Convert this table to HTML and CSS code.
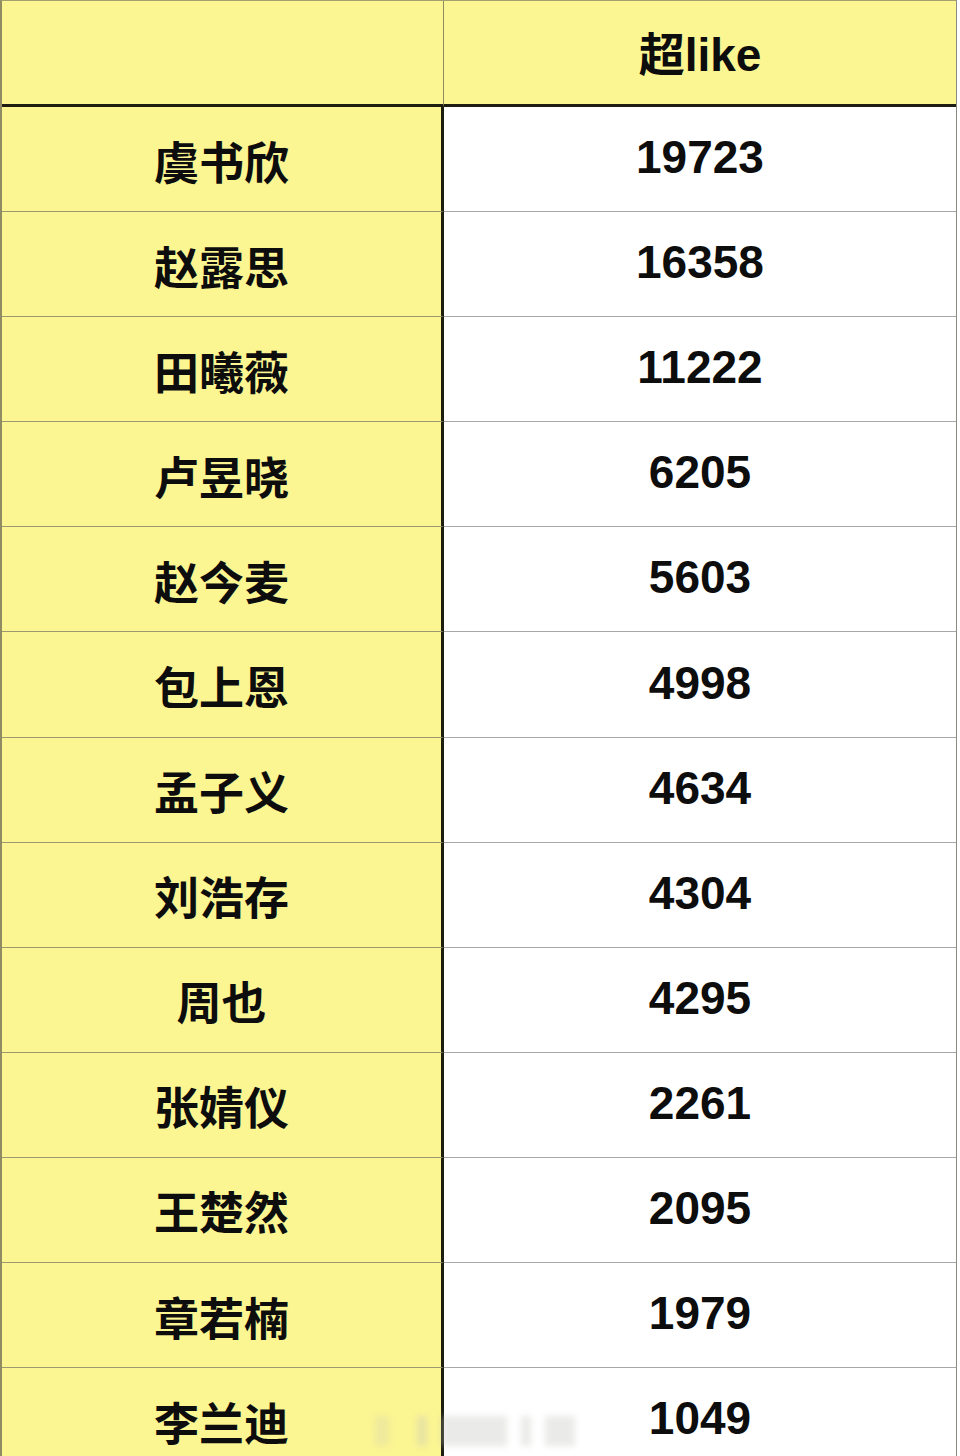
FILE: index.html
```html
<!DOCTYPE html>
<html lang="zh-CN">
<head>
<meta charset="utf-8">
<title>超like</title>
<link rel="stylesheet" href="styles.css">
</head>
<body>
<div class="sheet">
  <div class="cell head name-col"></div>
  <div class="cell head num-col">超like</div>

  <div class="cell name">虞书欣</div><div class="cell num">19723</div>
  <div class="cell name">赵露思</div><div class="cell num">16358</div>
  <div class="cell name">田曦薇</div><div class="cell num">11222</div>
  <div class="cell name">卢昱晓</div><div class="cell num">6205</div>
  <div class="cell name">赵今麦</div><div class="cell num">5603</div>
  <div class="cell name">包上恩</div><div class="cell num">4998</div>
  <div class="cell name">孟子义</div><div class="cell num">4634</div>
  <div class="cell name">刘浩存</div><div class="cell num">4304</div>
  <div class="cell name">周也</div><div class="cell num">4295</div>
  <div class="cell name">张婧仪</div><div class="cell num">2261</div>
  <div class="cell name">王楚然</div><div class="cell num">2095</div>
  <div class="cell name">章若楠</div><div class="cell num">1979</div>
  <div class="cell name">李兰迪</div><div class="cell num">1049</div>
</div>
<div class="watermark">
  <span class="wm w1"></span><span class="wm w2"></span><span class="wm w3"></span><span class="wm w4"></span><span class="wm w5"></span>
</div>
</body>
</html>
```

FILE: styles.css
```css
html, body {
  margin: 0;
  padding: 0;
  background: #ffffff;
  overflow: hidden;
}

.sheet {
  display: grid;
  grid-template-columns: 442px 512px;
  grid-template-rows: 106px;
  grid-auto-rows: 105.1px;
  width: 954px;
  border-top: 1px solid #a39f70;
  border-left: 2px solid #8f8b62;
  border-right: 1px solid #8c8c86;
  font-family: "Liberation Sans", "Noto Sans CJK SC", sans-serif;
  font-weight: 700;
  color: #0d0d0d;
}

.cell {
  display: flex;
  align-items: center;
  justify-content: center;
  box-sizing: border-box;
}

.head {
  background: #fbf592;
  border-bottom: 3px solid #1e1d12;
  font-size: 46px;
  padding-bottom: 4px;
}

.head.name-col {
  border-right: 1px solid #8f8b62;
}

.name {
  background: #fbf592;
  border-right: 3px solid #1e1d12;
  border-bottom: 1px solid #9c9870;
  font-family: "Noto Sans CJK SC", sans-serif;
  font-weight: 700;
  font-size: 45px;
  padding-top: 2px;
}

.num {
  background: #ffffff;
  border-bottom: 1px solid #a8a8a8;
  font-size: 46px;
  padding-bottom: 4px;
}

.watermark {
  position: absolute;
  left: 375px;
  top: 1416px;
  display: flex;
  gap: 14px;
  align-items: stretch;
  height: 30px;
  filter: blur(3px);
  opacity: 0.35;
}

.wm {
  display: block;
  background: #c4c4c0;
}

.w1 { width: 14px; background: #d8d6b0; }
.w2 { width: 10px; margin-left: 14px; }
.w3 { width: 66px; }
.w4 { width: 10px; }
.w5 { width: 30px; }
```
